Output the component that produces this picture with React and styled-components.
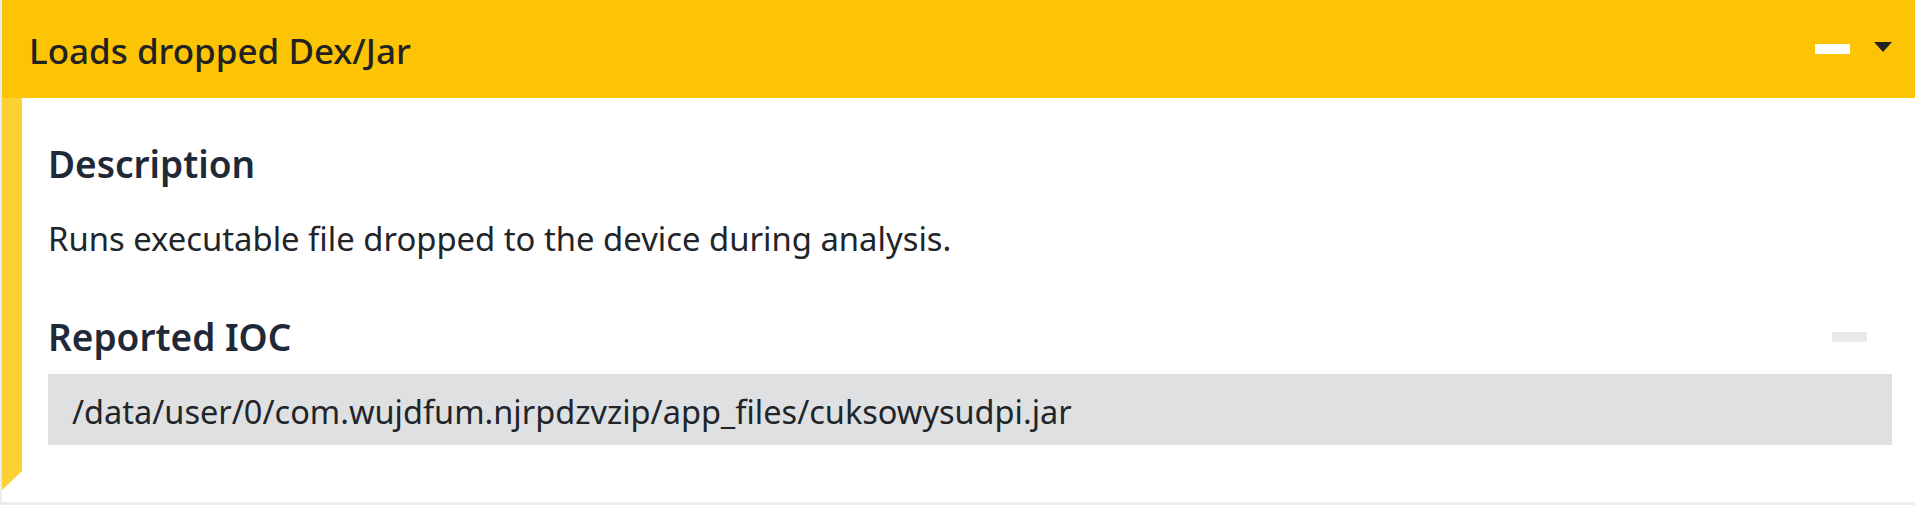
import styled, { createGlobalStyle } from "styled-components";

const GlobalStyle = createGlobalStyle`
  body {
    margin: 0;
    background: #ececec;
    font-family: "Noto Sans", "Open Sans", sans-serif;
  }
`;

const Page = styled.div`
  padding: 0 0 3px 2px;
`;

const Card = styled.section`
  background: #fff;
`;

const CardHeader = styled.header`
  height: 98px;
  box-sizing: border-box;
  background: #fcc404;
  display: flex;
  align-items: center;
  justify-content: space-between;
  padding: 0 23px 0 27px;
  color: #222;

  h2 {
    margin: 0;
    padding-top: 3px;
    font-size: 35px;
    font-weight: 500;
  }
`;

const Tools = styled.div`
  display: flex;
  align-items: center;
  gap: 24px;
`;

const MinusBar = styled.span`
  display: block;
  width: 35px;
  height: 10px;
  background: ${(p) => (p.$muted ? "#e9e9eb" : "#fff")};
`;

const Caret = styled.svg`
  display: block;
  margin-top: -4px;
`;

const CardBody = styled.div`
  display: flex;
`;

const Ribbon = styled.div`
  flex: 0 0 20px;
  background: #fdd033;
  clip-path: polygon(0 0, 100% 0, 100% calc(100% - 31px), 0 calc(100% - 12px));
`;

const Content = styled.div`
  flex: 1;
  padding: 44px 23px 57px 26px;
  color: #212529;
`;

const SectionTitle = styled.div`
  display: flex;
  align-items: center;
  justify-content: space-between;
  height: 44px;

  h3 {
    margin: 0;
    font-size: 37px;
    line-height: 44px;
    font-weight: 600;
    color: #1f2937;
  }

  ${MinusBar} {
    margin-right: 25px;
  }
`;

const Text = styled.p`
  margin: 28px 0 51px 0;
  font-size: 32.8px;
  line-height: 50px;
`;

const Ioc = styled.div`
  margin-top: 15px;
  background: #dfe0e2;
  height: 71px;
  box-sizing: border-box;
  padding: 3px 0 0 24px;
  display: flex;
  align-items: center;
  font-size: 32.5px;
  color: #212529;
`;

export default function App() {
  return (
    <Page>
      <GlobalStyle />
      <Card>
        <CardHeader>
          <h2>Loads dropped Dex/Jar</h2>
          <Tools>
            <MinusBar />
            <Caret width="18" height="10" viewBox="0 0 18 10">
              <polygon points="0,0 18,0 9,10" fill="#222" />
            </Caret>
          </Tools>
        </CardHeader>
        <CardBody>
          <Ribbon />
          <Content>
            <SectionTitle>
              <h3>Description</h3>
            </SectionTitle>
            <Text>Runs executable file dropped to the device during analysis.</Text>
            <SectionTitle>
              <h3>Reported IOC</h3>
              <MinusBar $muted />
            </SectionTitle>
            <Ioc>/data/user/0/com.wujdfum.njrpdzvzip/app_files/cuksowysudpi.jar</Ioc>
          </Content>
        </CardBody>
      </Card>
    </Page>
  );
}
